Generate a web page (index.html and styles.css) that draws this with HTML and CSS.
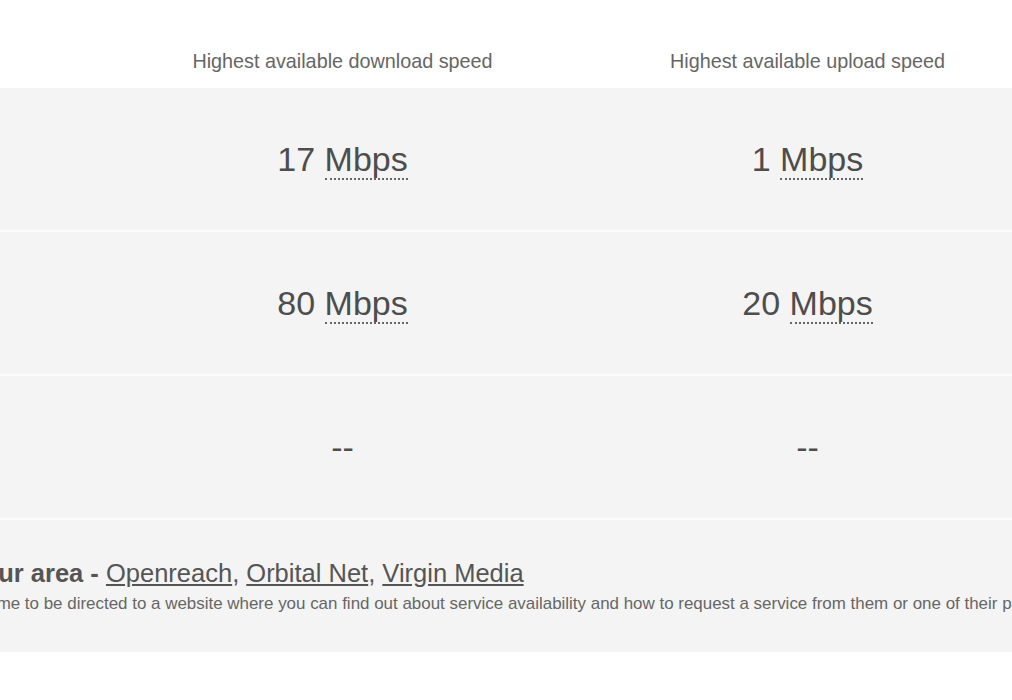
FILE: index.html
```html
<!DOCTYPE html>
<html lang="en">
<head>
  <meta charset="UTF-8" />
  <meta name="viewport" content="width=device-width, initial-scale=1.0"/>
  <title>Broadband speeds</title>
  <link rel="stylesheet" href="styles.css">
</head>
<body>
  <div class="speeds">
    <div class="row head">
      <div class="label"></div>
      <div class="cell">Highest available download speed</div>
      <div class="cell">Highest available upload speed</div>
    </div>
    <div class="row">
      <div class="label"></div>
      <div class="cell big">17 <abbr title="Megabits per second">Mbps</abbr></div>
      <div class="cell big">1 <abbr title="Megabits per second">Mbps</abbr></div>
    </div>
    <div class="row">
      <div class="label"></div>
      <div class="cell big">80 <abbr title="Megabits per second">Mbps</abbr></div>
      <div class="cell big">20 <abbr title="Megabits per second">Mbps</abbr></div>
    </div>
    <div class="row">
      <div class="label"></div>
      <div class="cell big">--</div>
      <div class="cell big">--</div>
    </div>
  </div>
  <div class="providers">
    <div class="providers-inner">
      <p class="providers-title">Providers in your area - <span class="links"><a href="#">Openreach</a>, <a href="#">Orbital Net</a>, <a href="#">Virgin Media</a></span></p>
      <p class="providers-note">Click on the provider's name to be directed to a website where you can find out about service availability and how to request a service from them or one of their partners.</p>
    </div>
  </div>
</body>
</html>
```

FILE: styles.css
```css
body {
    margin: 0;
    font-family: "Liberation Sans", Arial, sans-serif;
    color: #555;
    background-color: #fff;
    overflow: hidden;
}

.speeds {
    display: flex;
    flex-direction: column;
}

.row {
    display: grid;
    grid-template-columns: 110px 465px 465px;
    height: 142px;
    align-items: center;
    background-color: #f4f4f4;
    border-bottom: 2px solid #fbfbfb;
}

.row.head {
    height: 88px;
    align-items: start;
    background-color: #fff;
    border-bottom: none;
}

.cell {
    text-align: center;
}

.head .cell {
    font-size: 19.8px;
    color: #666;
    padding-top: 50px;
}

.big {
    font-size: 34px;
    color: #4d4d4d;
}

abbr {
    text-decoration: none;
    border-bottom: 2px dotted #666;
}

.providers {
    background-color: #f4f4f4;
    height: 132px;
    padding-top: 39px;
    box-sizing: border-box;
}

.providers-inner {
    margin-left: -186px;
    white-space: nowrap;
}

.providers-title {
    margin: 0;
    font-size: 25.5px;
    font-weight: bold;
}

.providers-title .links {
    font-weight: normal;
}

.providers-title a {
    color: #555;
}

.providers-note {
    margin: 6px 0 0;
    text-indent: -7px;
    font-size: 16.95px;
    color: #666;
}
```
